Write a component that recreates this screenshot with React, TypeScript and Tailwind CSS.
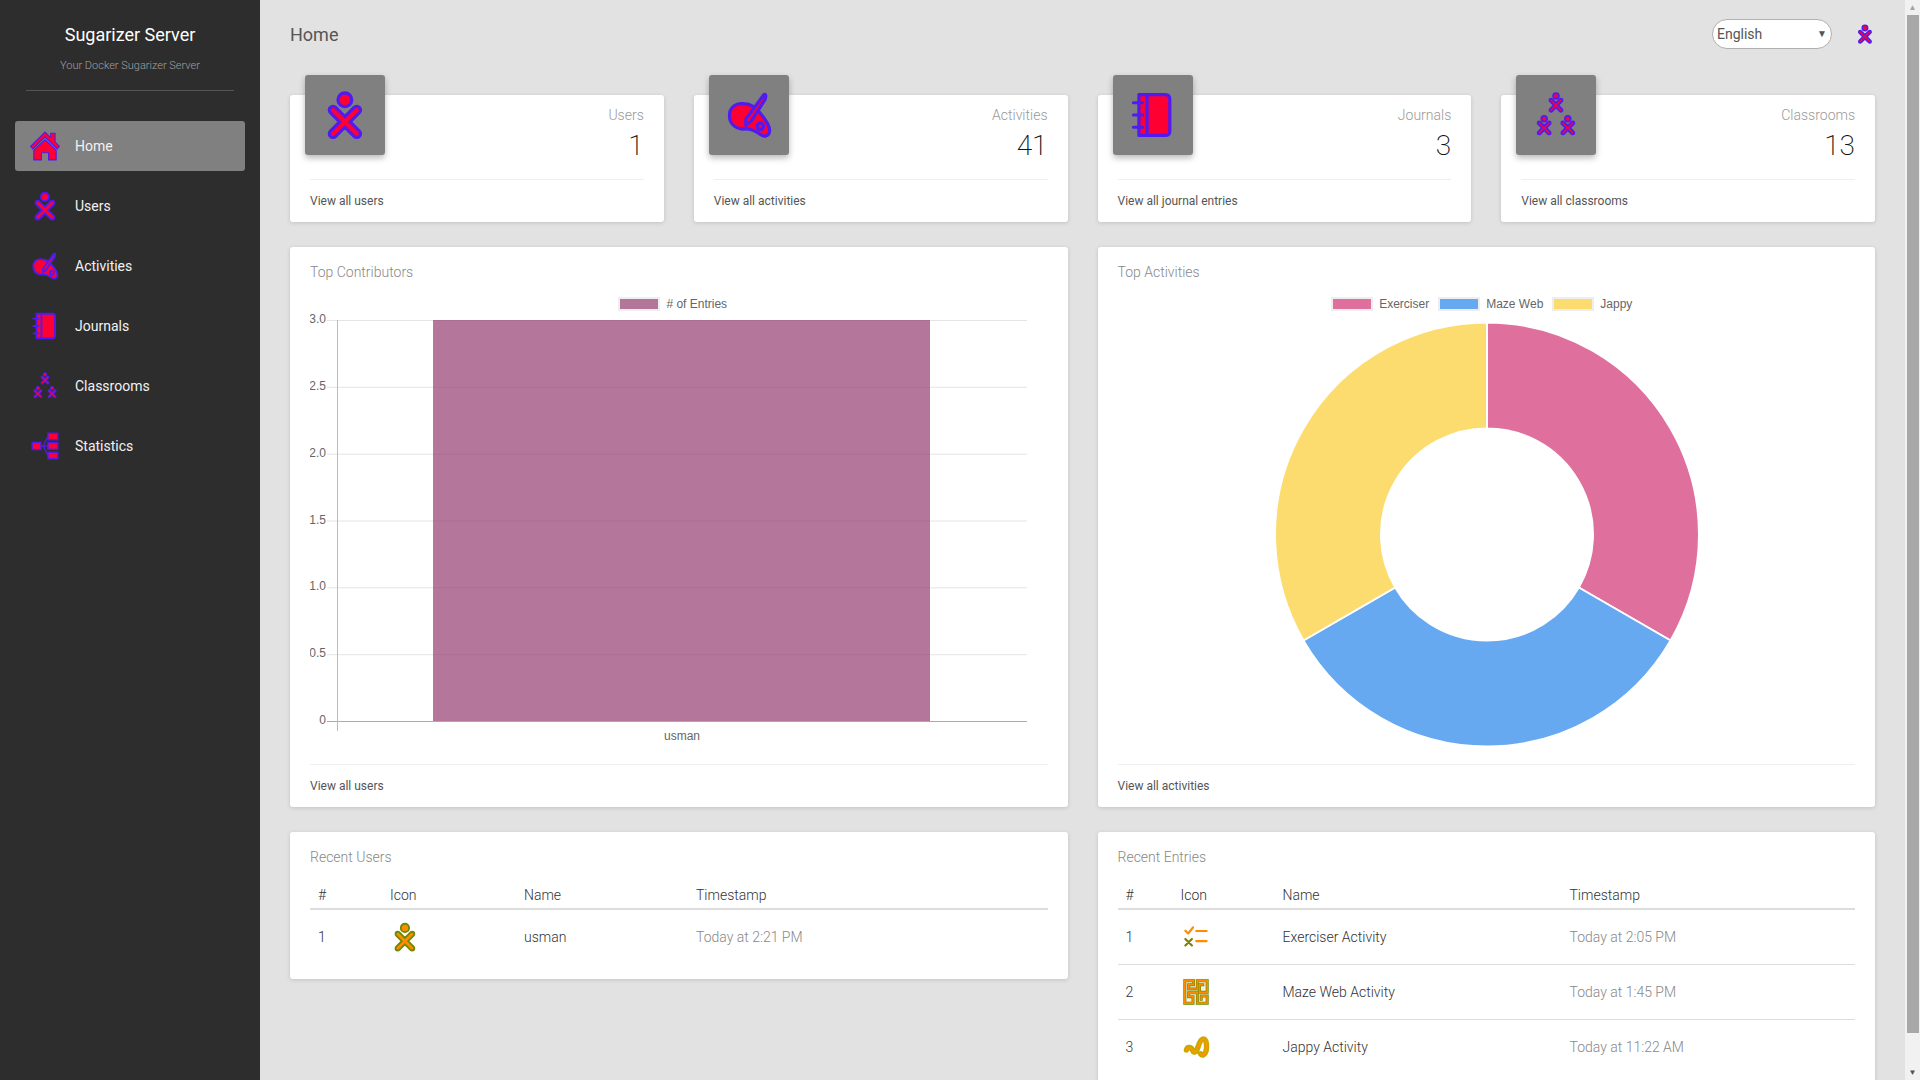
import type { ReactNode } from "react";

const RED = { fill: "#ff0033", stroke: "#4f1bf0" };
const ORANGE = { fill: "#ff8c00", stroke: "#6f8a00" };

type Colors = { fill: string; stroke: string };

const XO_BODY =
  "M33.233,35.1l10.102,10.1c0.752,0.75,1.217,1.783,1.217,2.932c0,2.287-1.855,4.143-4.146,4.143c-1.145,0-2.178-0.463-2.932-1.211L27.372,40.961l-10.1,10.1c-0.75,0.75-1.787,1.211-2.934,1.211c-2.284,0-4.143-1.854-4.143-4.141c0-1.146,0.465-2.184,1.212-2.934l10.104-10.1L11.409,24.995c-0.747-0.748-1.212-1.785-1.212-2.93c0-2.289,1.854-4.146,4.146-4.146c1.143,0,2.18,0.465,2.93,1.214l10.099,10.102l10.102-10.103c0.754-0.749,1.787-1.214,2.934-1.214c2.289,0,4.146,1.856,4.146,4.145c0,1.146-0.467,2.18-1.217,2.932L33.233,35.1z";

const Xo = ({ colors, sw = 3.5 }: { colors: Colors; sw?: number }) => (
  <g fill={colors.fill} stroke={colors.stroke} strokeWidth={sw}>
    <path d={XO_BODY} />
    <circle cx="27.371" cy="10.849" r="7.6" />
  </g>
);

const Icon = ({ size, children }: { size: number; children: ReactNode }) => (
  <svg width={size} height={size} viewBox="0 0 55 55" className="block shrink-0">
    {children}
  </svg>
);

const HomeIcon = () => (
  <g fill={RED.fill} stroke={RED.stroke} strokeWidth="2" strokeLinejoin="round">
    <path d="M27.5 2 L38 12 V4 H46 V20 L54 28 L50 33 L27.5 11 L5 33 L1 28 Z" />
    <path d="M27.5 16 L48 35 V53 H34 V40 H21 V53 H7 V35 Z" />
  </g>
);

const ActivityIcon = () => (
  <g fill={RED.fill} stroke={RED.stroke} strokeWidth="3.5" strokeLinejoin="round">
    <path d="M6 28 C6 19 13 14 22 15 C30 15 36 20 41 27 C47 34 51 41 50 46 C49 51 44 52 40 49 C35 45 28 42 20 43 C12 42 6 37 6 28 Z" />
    <path d="M44 5 C47 4 46 8 45 11 L30 34 L24 39 L24 32 Z" />
    <circle cx="40" cy="40" r="3.5" />
  </g>
);

const JournalIcon = () => (
  <g fill={RED.fill} stroke={RED.stroke} strokeWidth="3.5" strokeLinecap="round" strokeLinejoin="round">
    <path d="M12 5 H41 Q46 5 46 10 V45 Q46 50 41 50 H12 Z" />
    <path d="M21 5 V50" fill="none" />
    <path d="M6 14 H16 M6 27.5 H16 M6 41 H16" fill="none" />
  </g>
);

const ClassroomIcon = () => (
  <>
    <g transform="translate(16 2) scale(.42)">
      <Xo colors={RED} sw={4.5} />
    </g>
    <g transform="translate(3 27) scale(.42)">
      <Xo colors={RED} sw={4.5} />
    </g>
    <g transform="translate(29 27) scale(.42)">
      <Xo colors={RED} sw={4.5} />
    </g>
  </>
);

const StatsIcon = () => (
  <g fill={RED.fill} stroke={RED.stroke} strokeWidth="2.6">
    <path d="M20 27.5 H33 M24 27.5 L33 10 M24 27.5 L33 45" fill="none" />
    <rect x="4" y="21" width="16" height="13" />
    <rect x="33" y="4" width="18" height="12" />
    <rect x="33" y="21.5" width="18" height="12" />
    <rect x="33" y="39" width="18" height="12" />
  </g>
);

const ExerciserIcon = () => (
  <g fill="none" strokeWidth="4" strokeLinecap="round" strokeLinejoin="round">
    <path d="M8 16 L13 21 L22 10" stroke="#ff8c00" />
    <path d="M28 16.5 H47 M28 35 H47" stroke="#ff8c00" />
    <path d="M8 31 L20 43 M20 31 L8 43" stroke="#808000" />
  </g>
);

const MAZE_PATH =
  "M7 7 H23 V14 H14 V22 H30 V7 H48 V28 H34 V14 H40 M7 7 V48 H22 V36 H14 V29 H30 V48 H48 V35 H37 V41";

const MazeIcon = () => (
  <g fill="none" strokeLinecap="square">
    <rect x="3" y="3" width="49" height="49" fill="#eef3e2" />
    <path d={MAZE_PATH} stroke="#6f8a00" strokeWidth="5.5" />
    <path d={MAZE_PATH} stroke="#ff8c00" strokeWidth="3" />
  </g>
);

const JAPPY_PATH = "M10 33 C12 26 19 28 21 33 C23 39 28 37 30 31 C32 25 35 13 41 13 C47 13 48 27 46 35 C44 42 39 44 36 40";

const JappyIcon = () => (
  <g fill="none" strokeLinecap="round">
    <path d={JAPPY_PATH} stroke="#c9a800" strokeWidth="10" />
    <path d={JAPPY_PATH} stroke="#ff9800" strokeWidth="3" />
  </g>
);

const navItems: { label: string; icon: ReactNode; active?: boolean }[] = [
  { label: "Home", icon: <HomeIcon />, active: true },
  { label: "Users", icon: <Xo colors={RED} /> },
  { label: "Activities", icon: <ActivityIcon /> },
  { label: "Journals", icon: <JournalIcon /> },
  { label: "Classrooms", icon: <ClassroomIcon /> },
  { label: "Statistics", icon: <StatsIcon /> },
];

const statCards = [
  { label: "Users", value: "1", link: "View all users", icon: <Xo colors={RED} /> },
  { label: "Activities", value: "41", link: "View all activities", icon: <ActivityIcon /> },
  { label: "Journals", value: "3", link: "View all journal entries", icon: <JournalIcon /> },
  { label: "Classrooms", value: "13", link: "View all classrooms", icon: <ClassroomIcon /> },
];

const Sidebar = () => (
  <aside className="w-[260px] shrink-0 h-full bg-[#2d2d2d]">
    <div className="mx-[26px] h-[91px] border-b border-[#555] pt-6 text-center">
      <div className="text-lg leading-[22px] text-white">Sugarizer Server</div>
      <div className="mt-[12px] text-[11px] font-light leading-4 text-[#a0a0a0]">Your Docker Sugarizer Server</div>
    </div>
    <nav className="mt-[30px] px-[15px] flex flex-col gap-[10px]">
      {navItems.map((item) => (
        <a
          key={item.label}
          className={`flex h-[50px] items-center rounded-[3px] pl-[15px] text-sm text-[#f2f2f2] ${item.active ? "bg-[#808080]" : ""}`}
        >
          <Icon size={30}>{item.icon}</Icon>
          <span className="ml-[15px]">{item.label}</span>
        </a>
      ))}
    </nav>
  </aside>
);

const Header = () => (
  <div className="flex h-[68px] items-center justify-between">
    <h1 className="pt-[2px] text-lg font-normal text-[#555]">Home</h1>
    <div className="flex items-center gap-[23px]">
      <div className="flex h-[30px] w-[120px] items-center justify-between rounded-full border border-[#b0b0b0] bg-white pl-[4px] pr-[4px] text-sm text-[#555]">
        <span>English</span>
        <span className="text-[10px] text-[#555]">▼</span>
      </div>
      <Icon size={20}>
        <Xo colors={RED} sw={4} />
      </Icon>
    </div>
  </div>
);

const Card = ({ children, className = "" }: { children: ReactNode; className?: string }) => (
  <div className={`rounded-[3px] bg-white px-5 shadow-[0_1px_4px_rgba(0,0,0,0.14)] ${className}`}>{children}</div>
);

const Footer = ({ text }: { text: string }) => (
  <div className="border-t border-[#eee] pb-3 pt-3 text-xs leading-[18px] text-[#555]">{text}</div>
);

const StatCard = ({ label, value, link, icon }: (typeof statCards)[number]) => (
  <Card className="relative">
    <div className="absolute -top-5 left-[15px] flex h-20 w-20 items-center justify-center rounded-[3px] bg-[#808080] shadow-[0_3px_6px_rgba(0,0,0,0.28)]">
      <Icon size={50}>{icon}</Icon>
    </div>
    <div className="h-[84px] pt-[10px] text-right">
      <div className="text-sm font-light leading-5 text-[#999]">{label}</div>
      <div className="mt-1 text-[28px] font-extralight leading-[34px] text-[#111]">{value}</div>
    </div>
    <Footer text={link} />
  </Card>
);

const Swatch = ({ color, label }: { color: string; label: string }) => (
  <div className="flex items-center">
    <span className="h-[14px] w-[42px] border-2 border-[#eee]" style={{ background: color }} />
    <span className="ml-1.5 text-xs text-[#666]">{label}</span>
  </div>
);

const yTicks = [
  { label: "3.0", y: 9 },
  { label: "2.5", y: 75.8 },
  { label: "2.0", y: 142.7 },
  { label: "1.5", y: 209.5 },
  { label: "1.0", y: 276.3 },
  { label: "0.5", y: 343.2 },
  { label: "0", y: 410 },
];

const BarChart = () => (
  <svg width="737" height="441" className="block font-[family-name:'Liberation_Sans',sans-serif]">
    {yTicks.map((t) => (
      <g key={t.label}>
        <line x1="17" x2="717" y1={t.y + 0.5} y2={t.y + 0.5} stroke={t.label === "0" ? "#aaa" : "#e4e4e4"} />
        <text x="16" y={t.y + 3} textAnchor="end" fontSize="12" fill="#666">
          {t.label}
        </text>
      </g>
    ))}
    <line x1="27.5" x2="27.5" y1="9" y2="420" stroke="#bbb" />
    <rect x="123" y="9" width="497" height="401" fill="rgb(148,61,112)" fillOpacity="0.7" />
    <text x="372" y="429" textAnchor="middle" fontSize="12" fill="#666">
      usman
    </text>
  </svg>
);

// donut is three equal slices, starting at 12 o'clock
const Donut = () => {
  const cx = 369;
  const cy = 223.5;
  const R = 212;
  const r = 106;
  const slice = (from: number, to: number) => {
    const pt = (rad: number, deg: number) => {
      const a = ((deg - 90) * Math.PI) / 180;
      return `${cx + rad * Math.cos(a)} ${cy + rad * Math.sin(a)}`;
    };
    return `M${pt(R, from)} A${R} ${R} 0 0 1 ${pt(R, to)} L${pt(r, to)} A${r} ${r} 0 0 0 ${pt(r, from)} Z`;
  };
  return (
    <svg width="737" height="441" className="block">
      <path d={slice(0, 120)} fill="#df6f9c" stroke="#fff" strokeWidth="2" />
      <path d={slice(120, 240)} fill="#66a9f0" stroke="#fff" strokeWidth="2" />
      <path d={slice(240, 360)} fill="#fddc6f" stroke="#fff" strokeWidth="2" />
    </svg>
  );
};

const ChartCard = ({ title, legend, chart, link }: { title: string; legend: ReactNode; chart: ReactNode; link: string }) => (
  <Card className="h-[560px]">
    <div className="pt-[15px] text-sm font-light leading-5 text-[#888]">{title}</div>
    <div className="mt-[14px] flex h-[15px] justify-center font-[family-name:'Liberation_Sans',sans-serif]">{legend}</div>
    {chart}
    <div className="mt-3">
      <Footer text={link} />
    </div>
  </Card>
);

type Row = { name: string; time: string; icon: ReactNode };

const RecentTable = ({ title, rows, widths }: { title: string; rows: Row[]; widths: [string, string, string] }) => (
  <Card>
    <div className="pt-[15px] text-sm font-light leading-5 text-[#888]">{title}</div>
    <table className="mt-3 w-full text-sm">
      <thead>
        <tr className="h-[30px] border-b-2 border-[#ddd] text-left font-light text-[#333]">
          <th className={`px-2 pt-[2px] font-light ${widths[0]}`}>#</th>
          <th className={`px-2 pt-[2px] font-light ${widths[1]}`}>Icon</th>
          <th className={`px-2 pt-[2px] font-light ${widths[2]}`}>Name</th>
          <th className="px-2 pt-[2px] font-light">Timestamp</th>
        </tr>
      </thead>
      <tbody>
        {rows.map((row, i) => (
          <tr key={row.name} className="h-[55px] border-b border-[#ddd] font-light text-[#333] last:border-b-0">
            <td className="px-2">{i + 1}</td>
            <td className="px-2">
              <Icon size={30}>{row.icon}</Icon>
            </td>
            <td className="px-2">{row.name}</td>
            <td className="px-2 text-[#888]">{row.time}</td>
          </tr>
        ))}
      </tbody>
    </table>
    <div className="h-[15px]" />
  </Card>
);

const Scrollbar = () => (
  <div className="flex h-full w-[15px] shrink-0 flex-col items-center bg-[#f1f1f1]">
    <div className="flex h-[15px] items-center text-[8px] leading-none text-[#a3a3a3]">▲</div>
    <div className="h-[1018px] w-[12px] bg-[#a8a8a8]" />
    <div className="mt-auto flex h-[15px] items-center text-[8px] leading-none text-[#505050]">▼</div>
  </div>
);

const App = () => {
  return (
    <div className="flex h-screen w-full overflow-hidden bg-[#e2e2e2] font-[family-name:Roboto,sans-serif]">
      <Sidebar />
      <main className="flex-1 h-full overflow-hidden px-[30px]">
        <Header />
        <div className="mt-[27px] grid grid-cols-4 gap-[30px]">
          {statCards.map((card) => (
            <StatCard key={card.label} {...card} />
          ))}
        </div>
        <div className="mt-[25px] grid grid-cols-2 gap-[30px]">
          <ChartCard
            title="Top Contributors"
            legend={
              <div className="mr-3">
                <Swatch color="#b27698" label="# of Entries" />
              </div>
            }
            chart={<BarChart />}
            link="View all users"
          />
          <ChartCard
            title="Top Activities"
            legend={
              <div className="mr-[9px] flex gap-[9px]">
                <Swatch color="#df6f9c" label="Exerciser" />
                <Swatch color="#66a9f0" label="Maze Web" />
                <Swatch color="#fddc6f" label="Jappy" />
              </div>
            }
            chart={<Donut />}
            link="View all activities"
          />
        </div>
        <div className="mt-[25px] grid grid-cols-2 items-start gap-[30px]">
          <RecentTable
            title="Recent Users"
            widths={["w-[72px]", "w-[134px]", "w-[172px]"]}
            rows={[{ name: "usman", time: "Today at 2:21 PM", icon: <Xo colors={ORANGE} /> }]}
          />
          <RecentTable
            title="Recent Entries"
            widths={["w-[55px]", "w-[102px]", "w-[287px]"]}
            rows={[
              { name: "Exerciser Activity", time: "Today at 2:05 PM", icon: <ExerciserIcon /> },
              { name: "Maze Web Activity", time: "Today at 1:45 PM", icon: <MazeIcon /> },
              { name: "Jappy Activity", time: "Today at 11:22 AM", icon: <JappyIcon /> },
            ]}
          />
        </div>
      </main>
      <Scrollbar />
    </div>
  );
};

export default App;
